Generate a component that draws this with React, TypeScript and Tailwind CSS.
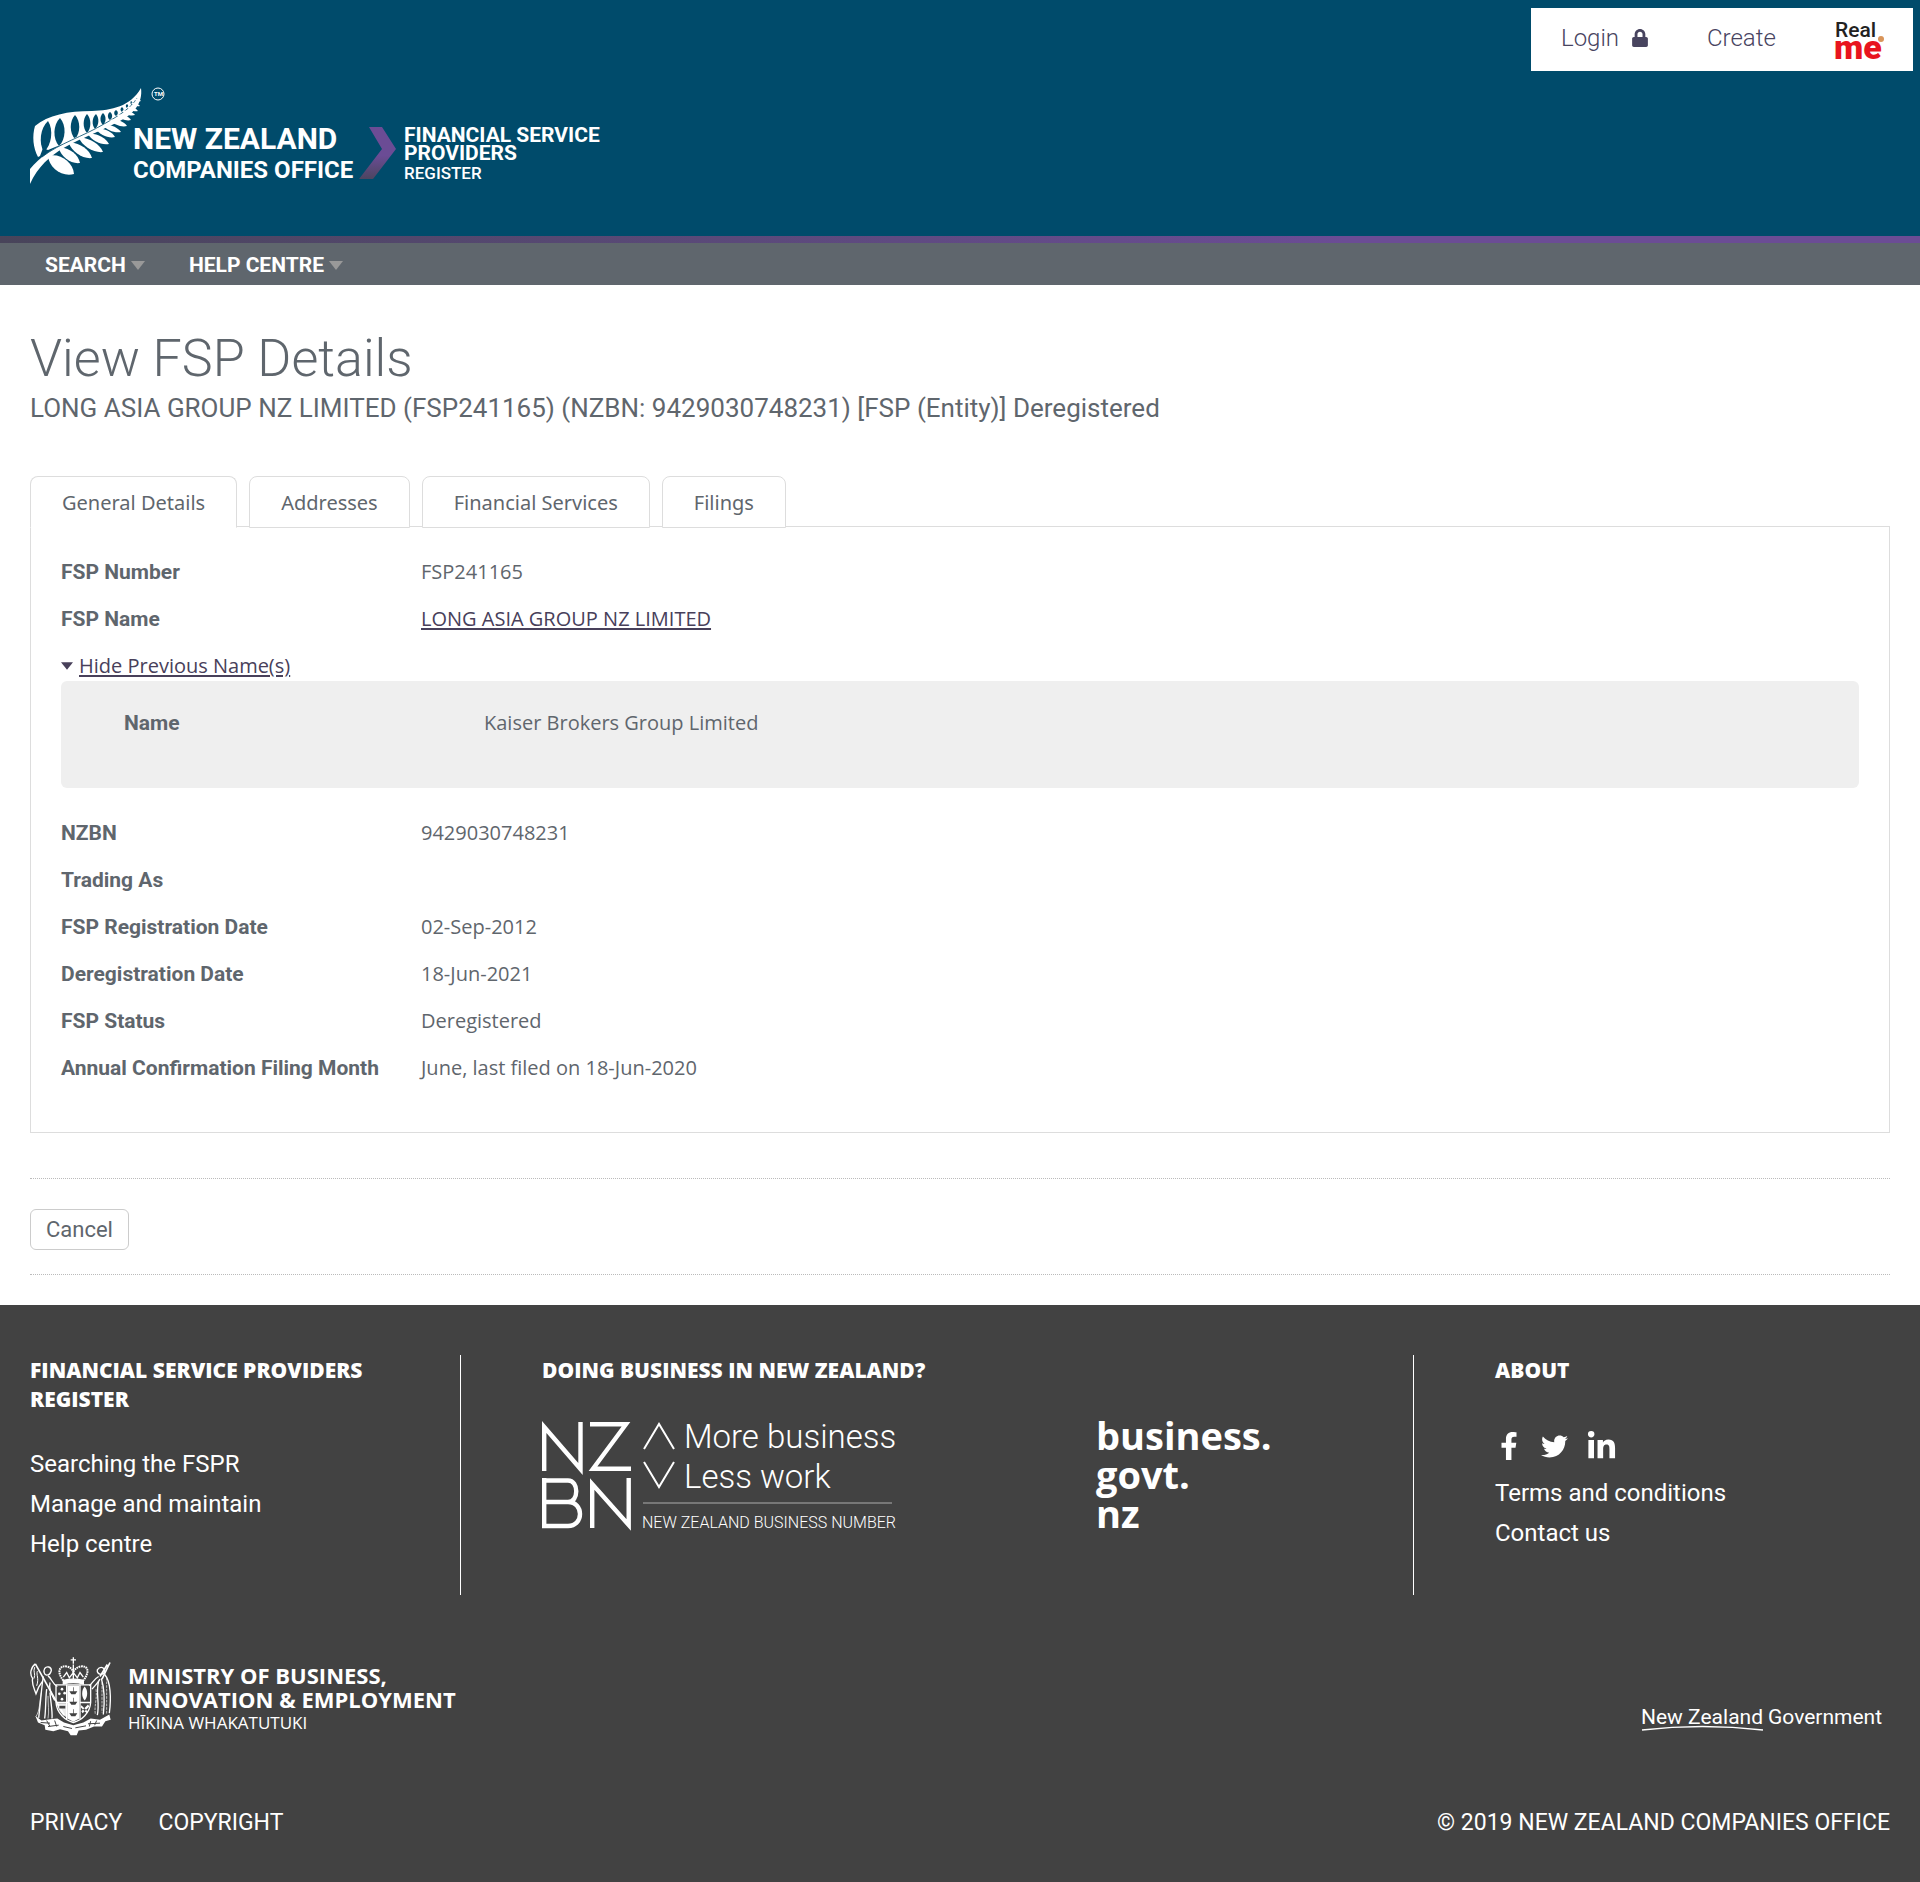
import React from 'react';
import { FaFacebookF, FaLinkedinIn, FaLock, FaTwitter } from 'react-icons/fa';

const tabs = ['General Details', 'Addresses', 'Financial Services', 'Filings'];

const details = [
  { label: 'NZBN', value: '9429030748231' },
  { label: 'Trading As', value: '' },
  { label: 'FSP Registration Date', value: '02-Sep-2012' },
  { label: 'Deregistration Date', value: '18-Jun-2021' },
  { label: 'FSP Status', value: 'Deregistered' },
  { label: 'Annual Confirmation Filing Month', value: 'June, last filed on 18-Jun-2020' },
];

// Gaps between the upper fronds: top x/y, bottom x/y, half width
const frondGaps = [
  [48, 121, 44, 152, 5],
  [60, 118, 59, 146, 5],
  [75, 115, 75, 139, 4.2],
  [87, 114, 87, 133, 3.3],
  [96, 114, 95, 129, 2.8],
  [103, 113, 103, 125, 2.5],
  [110, 112, 110, 120, 2.1],
  [116, 110, 116, 116, 1.8],
  [122, 107, 122, 112, 1.5],
  [127, 104, 127, 108, 1.2],
  [131, 101, 132, 105, 1],
];

// Lower fronds: root x/y, tip x/y, half width
const lowerFronds = [
  [48, 156, 74, 174, 7],
  [59, 148, 80, 163, 4.6],
  [69, 143, 92, 158, 4.4],
  [79, 138, 103, 152, 4],
  [88, 134, 109, 144, 3.4],
  [96, 129, 115, 137, 3],
  [103, 125, 121, 132, 2.6],
  [110, 120, 127, 126, 2.4],
  [117, 115, 131, 120, 2.1],
  [122, 111, 135, 115, 1.9],
  [127, 107, 138, 111, 1.6],
  [131, 103, 140, 106, 1.4],
  [134, 99, 141, 101, 1.2],
];

function leaf([x1, y1, x2, y2, w]: number[]) {
  const dx = x2 - x1;
  const dy = y2 - y1;
  const len = Math.hypot(dx, dy);
  const nx = (-dy / len) * w * 1.35;
  const ny = (dx / len) * w * 1.35;
  const c = (t: number, s: number) => `${x1 + dx * t + nx * s} ${y1 + dy * t + ny * s}`;
  return `M${x1} ${y1}C${c(0.25, 1)} ${c(0.75, 1)} ${x2} ${y2}C${c(0.75, -1)} ${c(0.25, -1)} ${x1} ${y1}Z`;
}

const CompaniesOfficeLogo: React.FC = () => (
  <svg viewBox="30 80 580 110" className="w-[580px] h-[110px]" role="img" aria-label="New Zealand Companies Office">
    <defs>
      <linearGradient id="chevron" x1="0" y1="1" x2="0" y2="0">
        <stop offset="0" stopColor="#4c4560" />
        <stop offset="0.45" stopColor="#6b4c95" />
      </linearGradient>
    </defs>
    <path d="M35 126C48 115 68 111 92 111C112 110 130 107 141 88C143 103 134 114 118 122C96 134 66 142 48 150L43 148L40 156L38 157C33 148 32 136 35 126Z" fill="white" />
    {frondGaps.map((g, i) => (
      <path key={i} d={leaf(g)} fill="#004b6b" />
    ))}
    <path d="M30 184V169C50 145 80 137 104 124C120 115 134 106 139 94C137 110 118 121 101 130C80 141 46 149 30 184Z" fill="white" />
    <path d="M42 157C60 143 82 137 104 124C120 115 131 108 137 98" fill="none" stroke="#004b6b" strokeWidth="0.8" />
    {lowerFronds.map((f, i) => (
      <path key={i} d={leaf(f)} fill="white" />
    ))}
    <circle cx="158" cy="94" r="6" fill="none" stroke="white" strokeWidth="1" />
    <g fill="white" fontFamily="Roboto, sans-serif" fontWeight="700">
      <text x="154" y="96" fontSize="6">TM</text>
      <text x="133" y="149" fontSize="30">NEW ZEALAND</text>
      <text x="133" y="178" fontSize="24">COMPANIES OFFICE</text>
      <text x="404" y="142" fontSize="21">FINANCIAL SERVICE</text>
      <text x="404" y="160" fontSize="21">PROVIDERS</text>
      <text x="404" y="179" fontSize="17" fontWeight="500">REGISTER</text>
    </g>
    <path d="M369 127H382L396 149L373 179H359L382 149Z" fill="url(#chevron)" />
  </svg>
);

const NzbnLogo: React.FC = () => (
  <svg viewBox="542 1420 352 109" className="w-[352px] h-[109px] overflow-visible" role="img" aria-label="New Zealand Business Number">
    <g fill="none" stroke="white" strokeWidth="4.4" strokeMiterlimit="10">
      <path d="M544.2 1471V1427L580.5 1469V1422" />
      <path d="M590 1424.2H626L593 1468.8H631" />
      <path d="M544.2 1478V1526.5M542 1480.5H568C579 1480.5 579 1502 568 1502H542M568 1502C584 1502 584 1526 568 1526H542" />
      <path d="M592.2 1528V1484L628.7 1525V1478" />
    </g>
    <g fill="none" stroke="white" strokeWidth="2">
      <path d="M644 1449L659 1424L674 1449" />
      <path d="M644 1462L659 1487L674 1462" />
    </g>
    <path d="M643 1503H892" stroke="#8a8a8a" strokeWidth="1.5" />
    <g fill="white" fontFamily="Roboto, sans-serif" fontWeight="300">
      <text x="684" y="1448" fontSize="33">More business</text>
      <text x="684" y="1488" fontSize="33">Less work</text>
      <text x="642" y="1528" fontSize="16">NEW ZEALAND BUSINESS NUMBER</text>
    </g>
  </svg>
);

const CoatOfArms: React.FC = () => (
  <svg viewBox="90 54 246 236" className="w-[82px] h-[79px] shrink-0" aria-hidden="true">
    <g fill="none" stroke="white" strokeWidth="4">
      {/* crown */}
      <path d="M220 54V74M212 62H228" />
      <path d="M190 124C168 96 180 78 200 82C212 84 218 92 220 100C222 92 230 84 242 82C262 78 272 96 250 124" strokeWidth="6" strokeDasharray="5 2" />
      <path d="M220 76V120M190 114L200 100L208 116L220 100L232 116L240 100L250 114" />
      <path d="M190 124Q220 116 250 124V134Q220 127 190 134Z" fill="white" />
      {/* shield */}
      <path d="M168 137H272V190C270 222 244 244 220 250C196 244 170 222 168 190Z" />
      <path d="M200 137V240M240 137V240M168 190H204M238 190H272" />
      {/* left supporter with flag */}
      <path d="M106 74L192 228" strokeWidth="5" />
      <path d="M106 74C92 84 88 106 98 118C94 132 102 146 108 164L116 144L128 126" />
      <path d="M104 84C98 98 108 104 102 118M112 96C108 108 118 116 110 140" strokeWidth="3" />
      <path d="M134 88C140 80 154 82 154 94C152 102 146 108 140 108C132 106 130 96 134 88Z" />
      <path d="M130 112C124 146 122 190 116 236M140 150C136 182 138 210 134 238M150 160C152 190 158 216 156 238" />
      <path d="M124 160C118 190 120 214 108 232M144 170C144 196 148 216 144 238" strokeWidth="2" />
      <path d="M144 110C156 118 156 134 172 142M150 130C146 146 150 160 164 184" />
      {/* right supporter with taiaha */}
      <path d="M330 70L306 120M322 76L300 112" strokeWidth="5" />
      <path d="M292 92C300 80 316 84 314 98C310 108 296 108 292 98Z" />
      <path d="M296 112C284 118 278 130 268 140M300 120C292 134 284 140 276 150" />
      <path d="M314 106C332 126 334 176 328 222M304 118C314 150 314 190 310 226M296 126C286 160 300 190 292 228" />
      <path d="M320 116V226M288 150C292 180 282 200 286 226M306 130V220" strokeWidth="2" strokeDasharray="8 3" />
    </g>
    <g fill="white">
      <path d="M202 139H238V238L220 248L202 238Z" />
      <path d="M170 192H202V236C184 226 174 212 170 192Z" opacity="0.9" />
      <circle cx="186" cy="150" r="4" />
      <circle cx="178" cy="164" r="4" />
      <circle cx="194" cy="162" r="4" />
      <circle cx="186" cy="180" r="4" />
      <path d="M254 142C264 152 264 174 254 184C244 174 244 152 254 142Z" />
      <path d="M244 198L264 218L260 222L242 204ZM264 196L244 216L248 222L268 202Z" />
      <path d="M106 230L124 244L150 240L172 238L192 250L220 258L250 250L272 238L300 242L328 226L332 242L316 246L306 262L282 262L258 272L236 274L230 288H212L204 276L180 270L160 276L136 272L134 258L114 250Z" />
    </g>
    <g fill="#424242">
      <path d="M208 156H232L226 165H214ZM219 144H221V156H219Z" />
      <path d="M208 188H232L226 197H214ZM219 176H221V188H219Z" />
      <path d="M208 222H232L226 231H214ZM219 210H221V222H219Z" />
      <path d="M178 200H196V208H178Z" />
    </g>
    <path d="M122 250L150 252M144 262L176 258M190 262L216 268M226 266L258 260M264 254L300 252M140 244L150 262M164 244L170 262M272 246L268 262M290 244L284 258" stroke="#424242" strokeWidth="3" />
  </svg>
);

const Triangle: React.FC<{ className: string }> = ({ className }) => (
  <svg viewBox="0 0 14 9" className={className} fill="currentColor" aria-hidden="true">
    <path d="M0 0H14L7 9Z" />
  </svg>
);

const DetailRow: React.FC<{ label: string; children?: React.ReactNode }> = ({ label, children }) => (
  <div className="flex h-[47px] items-center">
    <dt className="w-[360px] shrink-0 font-['Roboto',sans-serif] text-[21px] font-bold">{label}</dt>
    <dd>{children}</dd>
  </div>
);

const FooterHeading: React.FC<{ children: React.ReactNode }> = ({ children }) => (
  <h3 className="pt-px font-['Open_Sans',sans-serif] text-[21px] leading-[29px] font-extrabold">{children}</h3>
);

const App: React.FC = () => {
  return (
    <div className="min-h-screen bg-white font-['Roboto',sans-serif] text-xl leading-6 text-[#5f666d]">
      <header className="bg-[#004b6b]">
        <div className="flex justify-end pt-2 pr-[7px]">
          <div className="flex h-[63px] w-[382px] items-center bg-white pl-[30px] text-2xl font-light text-[#48445f]">
            <a href="#login" className="flex w-[146px] items-center gap-3 pb-1">
              Login <FaLock size={18} />
            </a>
            <a href="#create" className="w-32 pb-1">Create</a>
            <a href="#realme" aria-label="RealMe">
              <svg viewBox="0 0 50 42" className="h-[42px] w-[50px] overflow-visible">
                <text x="0" y="18" fontSize="21" fontWeight="500" fill="#222222">Real</text>
                <text x="-1" y="40" fontSize="34" fontWeight="900" fill="#e8141e">me</text>
                <circle cx="46" cy="20" r="3" fill="#d9955a" />
              </svg>
            </a>
          </div>
        </div>
        <div className="px-[30px] pt-[9px] pb-[46px]">
          <CompaniesOfficeLogo />
        </div>
        <div className="h-[7px] bg-linear-to-r from-[#48445a] to-[#6b4c95] to-70%"></div>
        <nav className="flex h-[42px] items-center gap-11 bg-[#5f666d] px-[45px] pt-[2px] text-[21px] font-bold text-white">
          <a href="#search" className="flex items-center gap-[5px]">
            SEARCH <Triangle className="h-[9px] w-[14px] text-[#999999]" />
          </a>
          <a href="#help" className="flex items-center gap-[5px]">
            HELP CENTRE <Triangle className="h-[9px] w-[14px] text-[#999999]" />
          </a>
        </nav>
      </header>

      <main className="px-[30px] pb-[30px]">
        <h1 className="pt-11 text-[52px] leading-[60px] font-light">View FSP Details</h1>
        <h2 className="text-[26px] leading-[39px]">
          LONG ASIA GROUP NZ LIMITED (FSP241165) (NZBN: 9429030748231) [FSP (Entity)] Deregistered
        </h2>

        <div className="mt-12 flex gap-3 font-['Noto_Sans',sans-serif]" role="tablist">
          {tabs.map((tab, i) => (
            <button
              key={tab}
              role="tab"
              aria-selected={i === 0}
              className={
                i === 0
                  ? 'relative -mb-0.5 h-[52px] rounded-t-lg border border-[#dddddd] border-b-white bg-white px-[31px] pt-[2px]'
                  : 'relative -mb-0.5 h-[52px] rounded-t-lg border border-[#dddddd] bg-white px-[31px] pt-[2px]'
              }
            >
              {tab}
            </button>
          ))}
        </div>
        <section className="border border-[#dddddd] px-[30px] pt-[21px] pb-[41px] font-['Open_Sans',sans-serif]">
          <dl>
            <DetailRow label="FSP Number">FSP241165</DetailRow>
            <DetailRow label="FSP Name">
              <a href="#name" className="text-[#48405a] underline decoration-2 underline-offset-2">LONG ASIA GROUP NZ LIMITED</a>
            </DetailRow>
          </dl>
          <button className="mt-3 mb-[3px] flex items-center gap-[6px] text-[#48405a]">
            <Triangle className="h-2 w-3" />
            <span className="underline decoration-2 underline-offset-2">Hide Previous Name(s)</span>
          </button>
          <dl className="mb-[21px] rounded-md bg-[#efefef] px-[63px] pt-[18px] pb-[42px]">
            <DetailRow label="Name">Kaiser Brokers Group Limited</DetailRow>
          </dl>
          <dl>
            {details.map((row) => (
              <DetailRow key={row.label} label={row.label}>{row.value}</DetailRow>
            ))}
          </dl>
        </section>

        <div className="mt-[45px] border-y border-dotted border-[#bbbbbb] pt-[30px] pb-6">
          <button className="block h-[41px] rounded-md border border-[#cccccc] px-[15px] text-[22px]">Cancel</button>
        </div>
      </main>

      <footer className="bg-[#424242] px-[30px] pt-[50px] pb-11 text-2xl text-white">
        <div className="grid h-60 grid-cols-[431fr_953fr_476fr]">
          <div className="border-r border-white pr-14">
            <FooterHeading>FINANCIAL SERVICE PROVIDERS REGISTER</FooterHeading>
            <ul className="mt-[30px] leading-10">
              <li><a href="#searching">Searching the FSPR</a></li>
              <li><a href="#manage">Manage and maintain</a></li>
              <li><a href="#help-centre">Help centre</a></li>
            </ul>
          </div>
          <div className="border-r border-white pl-[81px]">
            <FooterHeading>DOING BUSINESS IN NEW ZEALAND?</FooterHeading>
            <div className="mt-[35px] flex gap-[202px]">
              <NzbnLogo />
              <div className="-mt-1 font-['Open_Sans',sans-serif] text-[38px] leading-[39px] font-bold">
                business.<br />govt.<br />nz
              </div>
            </div>
          </div>
          <div className="pl-[81px]">
            <FooterHeading>ABOUT</FooterHeading>
            <div className="mt-[45px] flex h-8 items-center gap-[18px]">
              <a href="#facebook" aria-label="Facebook"><FaFacebookF size={28} /></a>
              <a href="#twitter" aria-label="Twitter"><FaTwitter size={27} /></a>
              <a href="#linkedin" aria-label="LinkedIn"><FaLinkedinIn size={31} /></a>
            </div>
            <ul className="mt-[11px] leading-10">
              <li><a href="#terms">Terms and conditions</a></li>
              <li><a href="#contact">Contact us</a></li>
            </ul>
          </div>
        </div>

        <div className="mt-[62px] flex items-end justify-between">
          <div className="flex gap-4">
            <CoatOfArms />
            <div className="pt-[6px] font-['Open_Sans',sans-serif] text-[22px] leading-6 font-bold">
              MINISTRY OF BUSINESS,<br />INNOVATION &amp; EMPLOYMENT
              <div className="text-[17px] font-normal">HĪKINA WHAKATUTUKI</div>
            </div>
          </div>
          <svg viewBox="1640 1700 250 36" className="h-9 w-[250px]" role="img" aria-label="New Zealand Government">
            <g fill="white" fontFamily="Roboto, sans-serif">
              <text x="1641" y="1724" fontSize="21">New Zealand</text>
              <text x="1768" y="1724" fontSize="21">Government</text>
            </g>
            <path d="M1642 1730Q1702 1723 1763 1730" fill="none" stroke="white" strokeWidth="1.5" />
          </svg>
        </div>

        <div className="mt-[71px] flex justify-between text-[23px] leading-8">
          <div className="flex gap-9">
            <a href="#privacy">PRIVACY</a>
            <a href="#copyright">COPYRIGHT</a>
          </div>
          <p>© 2019 NEW ZEALAND COMPANIES OFFICE</p>
        </div>
      </footer>
    </div>
  );
};

export default App;
